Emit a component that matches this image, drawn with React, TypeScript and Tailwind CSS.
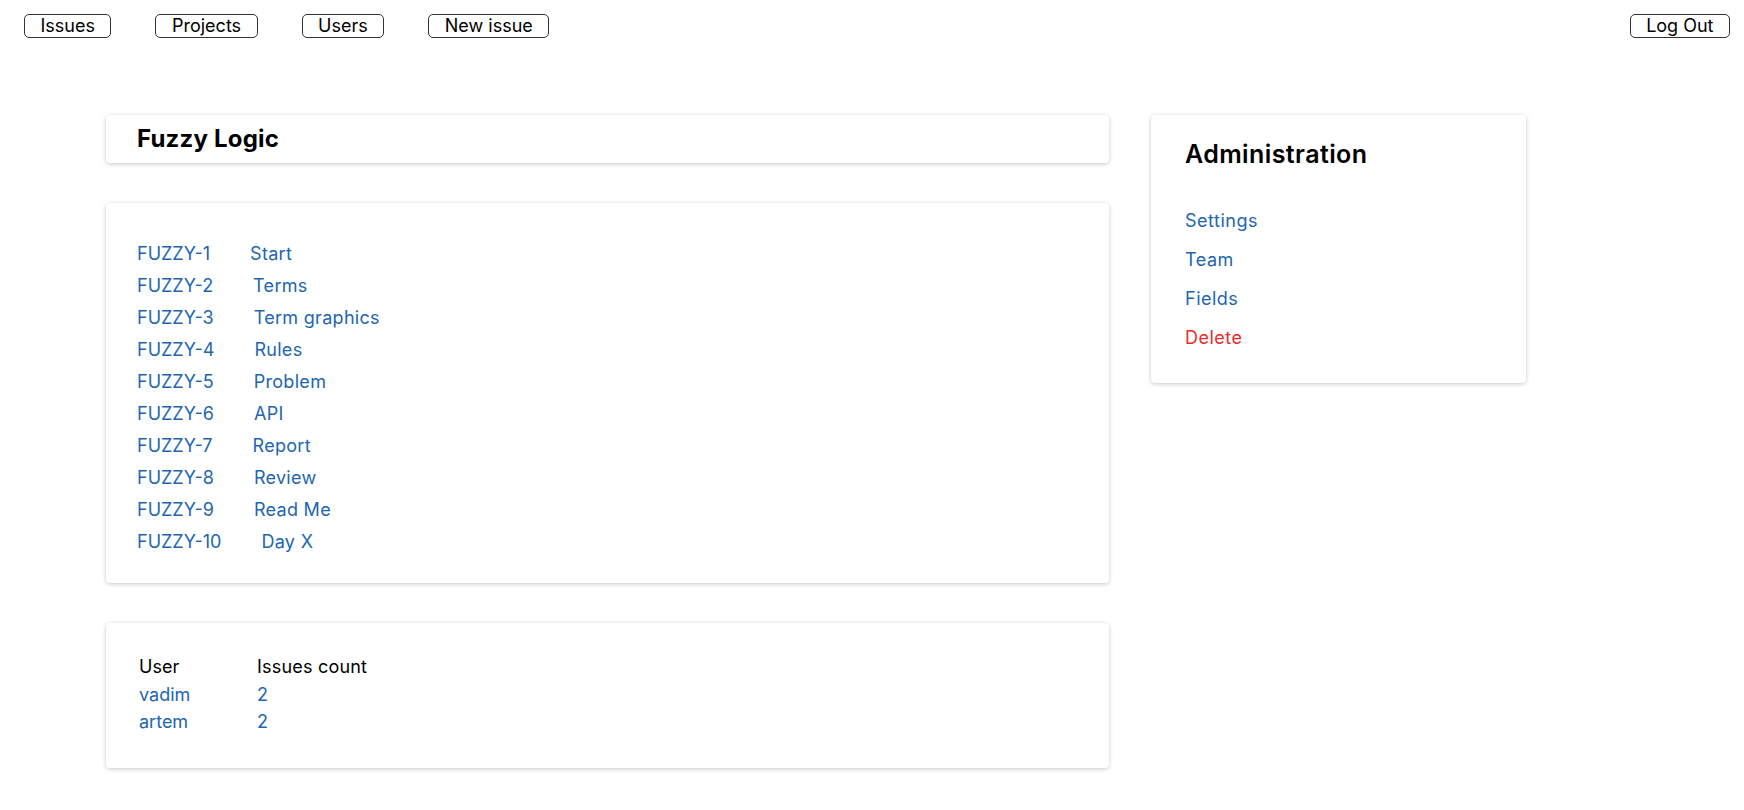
import React from 'react'

const issues = [
  { key: 'FUZZY-1', title: 'Start' },
  { key: 'FUZZY-2', title: 'Terms' },
  { key: 'FUZZY-3', title: 'Term graphics' },
  { key: 'FUZZY-4', title: 'Rules' },
  { key: 'FUZZY-5', title: 'Problem' },
  { key: 'FUZZY-6', title: 'API' },
  { key: 'FUZZY-7', title: 'Report' },
  { key: 'FUZZY-8', title: 'Review' },
  { key: 'FUZZY-9', title: 'Read Me' },
  { key: 'FUZZY-10', title: 'Day X' },
]

const users = [
  { name: 'vadim', count: 2 },
  { name: 'artem', count: 2 },
]

const navLinks = ['Issues', 'Projects', 'Users', 'New issue']

function NavButton({ label }: { label: string }) {
  return (
    <button className="h-[24px] px-[15.5px] border border-[#333] rounded-[5px] bg-white text-[18px] leading-[22px] text-black">
      {label}
    </button>
  )
}

export default function App() {
  return (
    <div className="min-h-screen bg-white text-black font-['Inter',sans-serif]">
      {/* Top bar */}
      <nav className="flex justify-between pl-[24px] pr-[14px] pt-[14px]">
        <div className="flex gap-[44px]">
          {navLinks.map((l) => (
            <NavButton key={l} label={l} />
          ))}
        </div>
        <NavButton label="Log Out" />
      </nav>

      <main className="flex items-start gap-[42px] pl-[106px] mt-[77px]">
        <div className="w-[1003px] flex flex-col gap-[40px]">
          {/* Project title */}
          <div className="h-[48px] flex items-center pl-[31px] bg-white rounded-[4px] shadow-[0_1px_4px_rgba(0,0,0,0.22)]">
            <h1 className="text-[24px] font-bold leading-none tracking-[0.2px]">Fuzzy Logic</h1>
          </div>

          {/* Issue list */}
          <div className="pl-[31px] pt-[35px] pb-[25px] bg-white rounded-[4px] shadow-[0_1px_4px_rgba(0,0,0,0.22)]">
            <ul>
              {issues.map((issue) => (
                <li key={issue.key} className="flex gap-[40px] text-[18px] leading-[32px] text-[#2266b0]">
                  <a href="#">{issue.key}</a>
                  <a href="#" className="tracking-[0.3px]">{issue.title}</a>
                </li>
              ))}
            </ul>
          </div>

          {/* Users */}
          <div className="pl-[33px] pt-[30px] pb-[32px] bg-white rounded-[4px] shadow-[0_1px_4px_rgba(0,0,0,0.22)]">
            <table className="text-[18px] leading-[27.5px]">
              <thead>
                <tr>
                  <th className="w-[118px] text-left font-normal p-0">User</th>
                  <th className="text-left font-normal p-0 tracking-[0.2px]">Issues count</th>
                </tr>
              </thead>
              <tbody>
                {users.map((u) => (
                  <tr key={u.name} className="text-[#2266b0]">
                    <td className="p-0"><a href="#">{u.name}</a></td>
                    <td className="p-0"><a href="#">{u.count}</a></td>
                  </tr>
                ))}
              </tbody>
            </table>
          </div>
        </div>

        {/* Administration */}
        <aside className="w-[375px] pl-[34px] pt-[23px] pb-[26px] bg-white rounded-[4px] shadow-[0_1px_4px_rgba(0,0,0,0.22)]">
          <h2 className="text-[25px] font-semibold leading-[32px] tracking-[0.4px]">Administration</h2>
          <div className="mt-[31px] flex flex-col text-[18px] leading-[39px] tracking-[0.5px]">
            <a href="#" className="text-[#2266b0]">Settings</a>
            <a href="#" className="text-[#2266b0]">Team</a>
            <a href="#" className="text-[#2266b0]">Fields</a>
            <a href="#" className="text-[#ee2a2a]">Delete</a>
          </div>
        </aside>
      </main>
    </div>
  )
}
